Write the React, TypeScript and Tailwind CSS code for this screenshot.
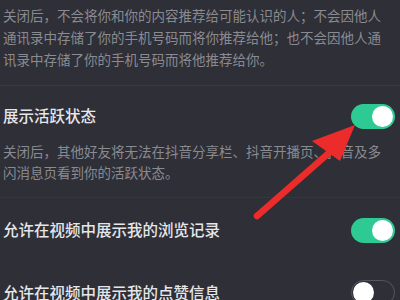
import React from "react";

function Toggle({ on }: { on: boolean }) {
  return on ? (
    <div className="w-[44px] h-[25px] rounded-full bg-[#2dcb93] flex items-center justify-end pr-[2px] shrink-0">
      <div className="w-[21px] h-[21px] rounded-full bg-white" />
    </div>
  ) : (
    <div className="w-[44px] h-[25px] rounded-full border-[1.5px] border-[#55565e] flex items-center justify-start pl-[1px] shrink-0">
      <div className="w-[21px] h-[21px] rounded-full bg-white" />
    </div>
  );
}

export default function App() {
  const font = "font-['Noto_Sans_CJK_SC','Noto_Sans',sans-serif]";
  return (
    <div className={`relative w-[400px] h-[300px] overflow-hidden bg-[#2e2f37] ${font}`}>
      {/* top description */}
      <div className="pl-[3px] pt-[4px] text-[13.5px] leading-[22px] text-[#8a8b91] whitespace-nowrap">
        <div>关闭后，不会将你和你的内容推荐给可能认识的人；不会因他人</div>
        <div>通讯录中存储了你的手机号码而将你推荐给他；也不会因他人通</div>
        <div>讯录中存储了你的手机号码而将他推荐给你。</div>
      </div>

      <div className="mt-[15px] border-t border-[#383942]" />

      {/* active status */}
      <div className="pt-[18px] pl-[3px] pr-[5px]">
        <div className="flex items-center justify-between h-[24px]">
          <span className="text-[15.5px] font-medium text-[#e6e6e9]">展示活跃状态</span>
          <Toggle on />
        </div>
        <div className="mt-[13px] text-[13.5px] leading-[21px] text-[#8a8b91] whitespace-nowrap">
          <div>关闭后，其他好友将无法在抖音分享栏、抖音开播页、抖音及多</div>
          <div>闪消息页看到你的活跃状态。</div>
        </div>
      </div>

      <div className="mt-[14px] border-t border-[#34353d]" />

      <div className="pt-[20px] pl-[3px] pr-[5px] flex flex-col gap-[38px]">
        <div className="flex items-center justify-between h-[24px]">
          <span className="text-[15.5px] font-medium text-[#e6e6e9]">允许在视频中展示我的浏览记录</span>
          <Toggle on />
        </div>
        <div className="flex items-center justify-between h-[24px]">
          <span className="text-[15.5px] leading-[20px] font-medium text-[#e6e6e9]">允许在视频中展示我的点赞信息</span>
          <Toggle on={false} />
        </div>
      </div>

      {/* red arrow annotation */}
      <svg className="absolute left-0 top-0 pointer-events-none" width="400" height="300" viewBox="0 0 400 300">
        <line x1="257" y1="216" x2="330" y2="152" stroke="#ec2b2b" strokeWidth="6.5" strokeLinecap="round" />
        <polygon points="355,125 312,141 340,161" fill="#ec2b2b" />
      </svg>
    </div>
  );
}
